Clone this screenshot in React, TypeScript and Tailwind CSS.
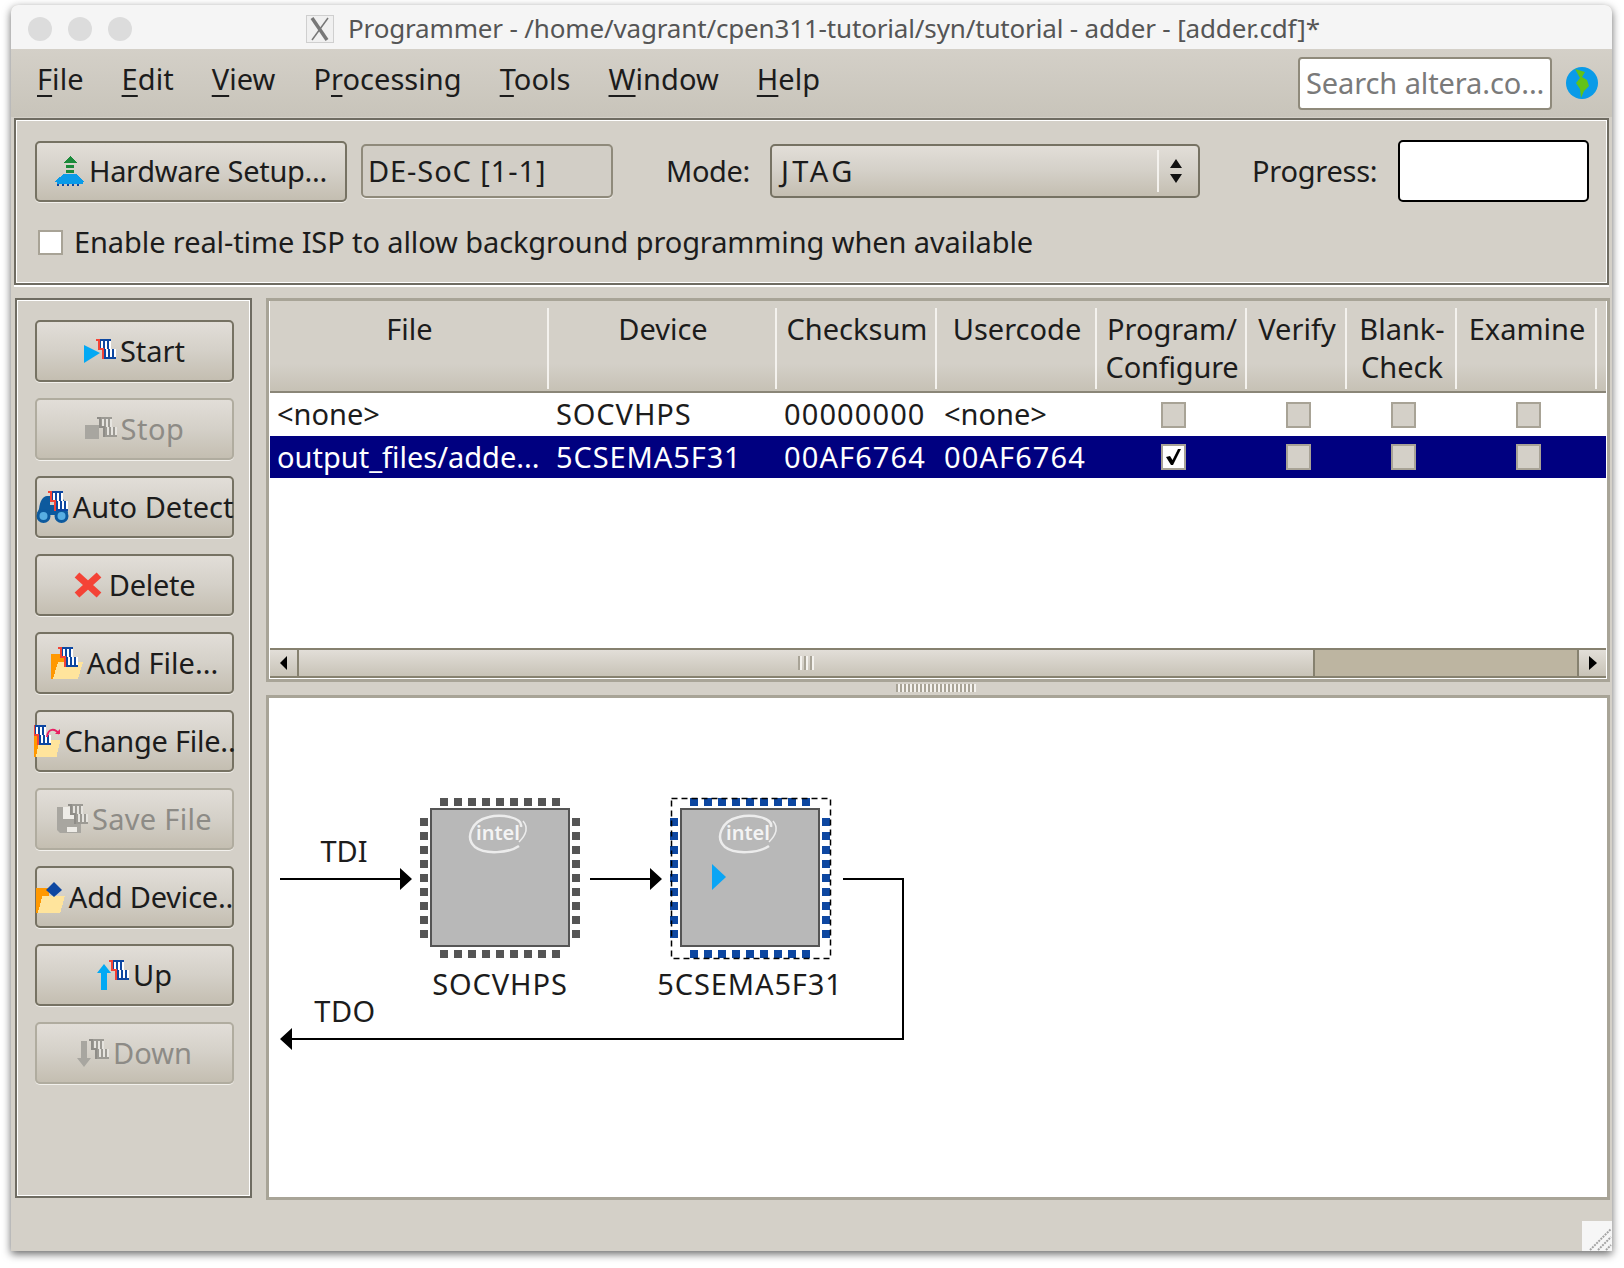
import React from "react";

const FONT = "font-['Noto_Sans',sans-serif]";

function Chain({ x, y, gray }: { x: number; y: number; gray?: boolean }) {
  const dark = gray ? "#9c9a94" : "#0d47a1";
  const edge = gray ? "#8f8d88" : "#f44336";
  const light = gray ? "#e6e4df" : "#ffffff";
  const stripes = (bx: number, by: number, h: number) =>
    [2, 6, 10].map((o) => <rect key={`${bx}-${o}`} x={bx + o} y={by} width={2} height={h} fill={light} />);
  return (
    <g transform={`translate(${x} ${y})`} shapeRendering="crispEdges">
      <rect x={3} y={0} width={12} height={10} fill={dark} />
      {stripes(3, 2, 8)}
      <rect x={8} y={10} width={12} height={10} fill={dark} />
      {stripes(8, 10, 8)}
      <path d="M0 1H3V10H7V20" fill="none" stroke={edge} strokeWidth={2} />
    </g>
  );
}

function Folder({ x, y }: { x: number; y: number }) {
  return (
    <g transform={`translate(${x} ${y})`} shapeRendering="crispEdges">
      <path d="M0 7H14V15H7L2 32H0Z" fill="#ff9800" />
      <path d="M7 15H32L27 32H2Z" fill="#ffe49c" />
    </g>
  );
}

function Ic({ w, h, children }: { w: number; h: number; children: React.ReactNode }) {
  return (
    <svg width={w} height={h} viewBox={`0 0 ${w} ${h}`} className="shrink-0">
      {children}
    </svg>
  );
}

const IconStart = () => (
  <Ic w={32} h={24}>
    <path d="M0 6L16 14L0 24Z" fill="#03a9f4" />
    <Chain x={12} y={0} />
  </Ic>
);
const IconStop = () => (
  <Ic w={32} h={24}>
    <rect x={0} y={8} width={14} height={14} fill="#a8a6a0" />
    <Chain x={12} y={0} gray />
  </Ic>
);
const IconAuto = () => (
  <Ic w={33} h={32}>
    <path d="M3 18C4 10 7 5 11 5H14V14H19V5H22C26 5 31 12 32 22H1Z" fill="#0d5a9e" />
    <rect x={13} y={18} width={7} height={6} fill="#0d5a9e" />
    <circle cx={7.5} cy={25} r={7} fill="#0d5a9e" />
    <circle cx={25.5} cy={25} r={7} fill="#0d5a9e" />
    <circle cx={7.5} cy={25} r={4} fill="#58aee2" />
    <circle cx={25.5} cy={25} r={4} fill="#58aee2" />
    <Chain x={12} y={0} />
  </Ic>
);
const IconDelete = () => (
  <Ic w={31} h={26}>
    <path d="M3 3L25 23M25 3L3 23" stroke="#f44336" strokeWidth={7} />
  </Ic>
);
const IconAdd = () => (
  <Ic w={32} h={32}>
    <Folder x={0} y={0} />
    <Chain x={7} y={0} />
  </Ic>
);
const IconChange = () => (
  <Ic w={27} h={32}>
    <g transform="scale(0.83 1)">
      <Folder x={0} y={0} />
    </g>
    <Chain x={-3} y={0} />
    <path d="M13 12C14 3 21 3 25 9" fill="none" stroke="#e91e63" strokeWidth={2} />
    <path d="M21 9H26V4Z" fill="#e91e63" />
  </Ic>
);
const IconSave = () => (
  <Ic w={31} h={30}>
    <path d="M0 3H24V29H3L0 26Z" fill="#a8a6a0" />
    <rect x={6} y={3} width={15} height={12} fill="#eeece7" />
    <rect x={10} y={23} width={10} height={5} fill="#eeece7" />
    <Chain x={11} y={0} gray />
  </Ic>
);
const IconDevice = () => (
  <Ic w={29} h={31}>
    <g transform="translate(0 -1) scale(0.9 1)">
      <Folder x={0} y={0} />
    </g>
    <path d="M18 0L26 8L18 15L10 8Z" fill="#0d47a1" />
  </Ic>
);
const IconUp = () => (
  <Ic w={32} h={30}>
    <path d="M7 4L14 13H10V30H4V13H0Z" fill="#03a9f4" />
    <Chain x={12} y={0} />
  </Ic>
);
const IconDown = () => (
  <Ic w={32} h={28}>
    <path d="M4 2H10V19H14L7 28L0 19H4Z" fill="#a8a6a0" />
    <Chain x={12} y={0} gray />
  </Ic>
);

function Btn({
  icon,
  label,
  disabled,
  className,
  track,
}: {
  icon: React.ReactNode;
  label: string;
  disabled?: boolean;
  className: string;
  track?: string;
}) {
  return (
    <div
      className={`${className} flex items-center justify-center whitespace-nowrap rounded-[5px] border-2 bg-gradient-to-b from-[#e2ded8] via-[#d4d0c8] to-[#c4beb1] shadow-[0_1px_0_#f2f0ec] ${
        disabled ? "border-[#b0ac9f] text-[#8d8b86]" : "border-[#767263] text-[#1c1c1c]"
      }`}
    >
      {icon}
      <span className={`ml-[4px] pb-[2px] ${track ?? ""}`}>{label}</span>
    </div>
  );
}

const sideButtons: { label: string; icon: React.ReactNode; disabled?: boolean; track?: string }[] = [
  { label: "Start", icon: <IconStart /> },
  { label: "Stop", icon: <IconStop />, disabled: true, track: "tracking-[0.5px]" },
  { label: "Auto Detect", icon: <IconAuto /> },
  { label: "Delete", icon: <IconDelete />, track: "tracking-[-0.3px]" },
  { label: "Add File...", icon: <IconAdd /> },
  { label: "Change File..", icon: <IconChange />, track: "tracking-[-0.25px]" },
  { label: "Save File", icon: <IconSave />, disabled: true, track: "tracking-[0.3px]" },
  { label: "Add Device..", icon: <IconDevice />, track: "tracking-[-0.2px]" },
  { label: "Up", icon: <IconUp /> },
  { label: "Down", icon: <IconDown />, disabled: true },
];

const menus: { pre: string; u: string; post: string }[] = [
  { pre: "", u: "F", post: "ile" },
  { pre: "", u: "E", post: "dit" },
  { pre: "", u: "V", post: "iew" },
  { pre: "P", u: "r", post: "ocessing" },
  { pre: "", u: "T", post: "ools" },
  { pre: "", u: "W", post: "indow" },
  { pre: "", u: "H", post: "elp" },
];

const headers: React.ReactNode[] = [
  "File",
  "Device",
  "Checksum",
  "Usercode",
  <>Program/<br /><span className="tracking-[-0.2px]">Configure</span></>,
  "Verify",
  <>Blank-<br />Check</>,
  "Examine",
  "",
];

const COLS = "grid grid-cols-[279px_228px_160px_160px_150px_100px_110px_140px_9px]";

function Check({ checked }: { checked?: boolean }) {
  return (
    <div
      className={`flex h-[26px] w-[25px] items-center justify-center border-[2px] border-[#a8a396] ${
        checked ? "bg-white" : "bg-[#d4d0c8]"
      }`}
    >
      {checked && (
        <svg width="17" height="18" viewBox="0 0 17 18">
          <path d="M1 9L5 8L7.5 12L13 1H16L8 17H6Z" fill="#000" />
        </svg>
      )}
    </div>
  );
}

function Row({ cells, selected, checked }: { cells: string[]; selected?: boolean; checked?: boolean }) {
  const tracks = ["", "tracking-[0.9px]", "tracking-[1.1px]", selected ? "tracking-[1.1px]" : ""];
  return (
    <div
      className={`${COLS} items-center ${selected ? "h-[42px] bg-[#000080] text-white" : "h-[43px] text-[#1c1c1c]"}`}
    >
      {cells.map((c, i) => (
        <div key={i} className={`whitespace-nowrap pl-[7px] pb-[2px] ${tracks[i]}`}>
          {c}
        </div>
      ))}
      <div className="flex justify-center pl-[3px]">
        <Check checked={checked} />
      </div>
      <div className="flex justify-center pl-[3px]">
        <Check />
      </div>
      <div className="flex justify-center pl-[3px]">
        <Check />
      </div>
      <div className="flex justify-center pl-[3px]">
        <Check />
      </div>
    </div>
  );
}

function Chip({ x, blue }: { x: number; blue?: boolean }) {
  const pin = blue ? "#0d47a1" : "#555555";
  const n = [0, 1, 2, 3, 4, 5, 6, 7, 8];
  return (
    <g>
      {n.map((i) => (
        <g key={i} fill={pin} shapeRendering="crispEdges">
          <rect x={x + 9 + i * 14} y={798} width={8} height={8} />
          <rect x={x + 9 + i * 14} y={950} width={8} height={8} />
          <rect x={x - 11} y={818 + i * 14} width={8} height={8} />
          <rect x={x + 141} y={818 + i * 14} width={8} height={8} />
        </g>
      ))}
      <rect x={x} y={809} width={138} height={137} fill="#b8b8b8" stroke="#555555" strokeWidth={2} />
      <path
        d={`M${x + 90} 827C${x + 92} 817 ${x + 70} 814 ${x + 58} 817C${x + 40} 821 ${x + 34} 838 ${x + 44} 847C${x + 54} 855 ${x + 78} 853 ${x + 88} 846`}
        fill="none"
        stroke="#ececec"
        strokeWidth={2.5}
      />
      <text x={x + 67} y={840} textAnchor="middle" fontSize={20} fontWeight={600} fontFamily="Noto Sans" fill="#f4f4f4">
        intel
      </text>
      <path d={`M${x + 92} 821C${x + 98} 828 ${x + 94} 836 ${x + 88} 842`} fill="none" stroke="#ececec" strokeWidth={1.5} />
    </g>
  );
}

export default function App() {
  return (
    <div className={`${FONT} h-[1268px] w-[1624px] overflow-hidden bg-white pl-[11px] pt-[5px] text-[29px] leading-none`}>
      <div className="flex h-[1246px] w-[1601px] flex-col rounded-t-[7px] bg-[#d4d0c8] shadow-[0_3px_8px_rgba(0,0,0,0.6)]">
        {/* title bar */}
        <div className="flex h-[44px] items-center rounded-t-[7px] bg-[#f5f5f5] pl-[17px] pt-[3px] text-[26px] text-[#555555]">
          <div className="flex gap-[16px]">
            <div className="h-[24px] w-[24px] rounded-full bg-[#dcdcdc]" />
            <div className="h-[24px] w-[24px] rounded-full bg-[#dcdcdc]" />
            <div className="h-[24px] w-[24px] rounded-full bg-[#dcdcdc]" />
          </div>
          <svg width="28" height="28" viewBox="0 0 28 28" className="ml-[174px] shrink-0">
            <rect x="0.5" y="0.5" width="27" height="27" fill="#f0f0f0" stroke="#cfcfcf" />
            <path d="M22 3L6 25" stroke="#777777" strokeWidth={1.5} />
            <path d="M6 3L21 25" stroke="#777777" strokeWidth={3.5} />
          </svg>
          <span className="ml-[14px] whitespace-nowrap pb-[1px] tracking-[-0.16px]">Programmer - /home/vagrant/cpen311-tutorial/syn/tutorial - adder - [adder.cdf]*</span>
        </div>

        {/* menu bar */}
        <div className="flex h-[68px] items-center bg-gradient-to-b from-[#d4d0c8] to-[#c8c4ba] pl-[26px] pr-[14px] text-[#1c1c1c]">
          <div className="mb-[10px] flex gap-[38px] tracking-[0.05px]">
            {menus.map((m) => (
              <span key={m.u + m.post} className="whitespace-nowrap">
                {m.pre}
                <span className="underline decoration-[2px] underline-offset-[5px]">{m.u}</span>
                {m.post}
              </span>
            ))}
          </div>
          <div className="ml-auto flex h-[53px] w-[254px] items-center whitespace-nowrap rounded-[4px] border-2 border-[#8f8a7b] bg-white pb-[2px] pl-[6px] tracking-[-0.1px] text-[#7a7a7a]">
            Search altera.co...
          </div>
          <svg width="32" height="32" viewBox="0 0 32 32" className="ml-[14px] shrink-0">
            <circle cx="16" cy="16" r="16" fill="#0a9be8" />
            <path d="M9 2L19 5L16 10L21 13L23 19L18 24L15 31L14 22L10 16L14 11Z" fill="#62c217" />
          </svg>
        </div>

        {/* toolbar */}
        <div className="mx-[3px] mt-[1px] flex h-[167px] flex-col border-2 border-[#6f6c62] pl-[19px] pt-[20px] shadow-[inset_0_0_0_1px_#ffffff,0_2px_0_#ffffff]">
          <div className="flex h-[62px] items-center">
            <Btn className="h-[61px] w-[312px]" icon={<HardwareIcon />} label="Hardware Setup..." track="tracking-[-0.3px]" />
            <div className="ml-[14px] flex h-[54px] w-[252px] items-center rounded-[5px] border-2 border-[#8f8a7b] bg-[#d2cec6] pb-[2px] pl-[5px] tracking-[0.9px] text-[#1c1c1c] shadow-[0_1px_0_#f2f0ec]">
              DE-SoC [1-1]
            </div>
            <div className="ml-[53px] w-[104px] pb-[2px] tracking-[-0.4px] text-[#1c1c1c]">Mode:</div>
            <div className="flex h-[54px] w-[430px] items-center rounded-[5px] border-2 border-[#767263] bg-gradient-to-b from-[#e2ded8] via-[#d4d0c8] to-[#c4beb1] pl-[9px] text-[#1c1c1c]">
              <span className="pb-[2px] tracking-[3.4px]">JTAG</span>
              <div className="ml-auto flex h-[42px] w-[41px] items-center justify-center border-l-2 border-[#f4f2ee] pr-[5px]">
                <svg width="14" height="24" viewBox="0 0 14 24">
                  <path d="M7 0L13 9H1ZM1 15H13L7 24Z" fill="#111" />
                </svg>
              </div>
            </div>
            <div className="ml-[52px] w-[146px] pb-[2px] tracking-[-0.25px] text-[#1c1c1c]">Progress:</div>
            <div className="h-[62px] w-[191px] rounded-[5px] border-2 border-black bg-white" />
          </div>
          <div className="ml-[3px] mt-[25px] flex items-center text-[#1c1c1c]">
            <div className="h-[25px] w-[25px] border-2 border-[#a8a396] bg-white" />
            <span className="ml-[11px] whitespace-nowrap pb-[1px] tracking-[-0.1px]">Enable real-time ISP to allow background programming when available</span>
          </div>
        </div>

        {/* main */}
        <div className="mt-[13px] flex h-[902px]">
          <div className="ml-[4px] flex h-[900px] w-[237px] flex-col gap-[16px] border-2 border-[#6f6c62] pl-[18px] pt-[20px] shadow-[inset_0_0_0_1px_#ffffff]">
            {sideButtons.map((b) => (
              <Btn key={b.label} className="h-[62px] w-[199px]" icon={b.icon} label={b.label} disabled={b.disabled} track={b.track} />
            ))}
          </div>

          <div className="ml-[14px] flex w-[1344px] flex-col">
            {/* table pane */}
            <div className="flex h-[384px] flex-col border-[3px] border-[#a8a497] bg-white pl-[1px] pr-[1px]">
              <div className={`${COLS} h-[92px] border-b-2 border-[#8a8678] bg-gradient-to-b from-[#d4d0c8] from-70% to-[#c6c1b5] pt-[7px] text-center text-[#1c1c1c]`}>
                {headers.map((h, i) => (
                  <div key={i} className={`h-[81px] whitespace-nowrap pl-[2px] pt-[2px] leading-[38px] ${i < 8 ? "border-r-2 border-[#f4f2ee]" : ""}`}>
                    {h}
                  </div>
                ))}
              </div>
              <Row cells={["<none>", "SOCVHPS", "00000000", "<none>"]} />
              <Row selected checked cells={["output_files/adde...", "5CSEMA5F31", "00AF6764", "00AF6764"]} />
              <div className="flex-1" />
              <div className="mb-[1px] flex h-[30px] border-y-2 border-[#86816f] bg-gradient-to-b from-[#e2ded8] to-[#c8c3b7]">
                <div className="flex w-[29px] items-center justify-center border-r-2 border-[#86816f]">
                  <svg width="8" height="14" viewBox="0 0 8 14">
                    <path d="M7 0V14L0 7Z" fill="#000" />
                  </svg>
                </div>
                <div className="flex w-[1016px] items-center justify-center border-r-2 border-[#86816f]">
                  <svg width="16" height="14" viewBox="0 0 16 14" shapeRendering="crispEdges">
                    <path d="M0 0h2v14H0zM6 0h2v14H6zM12 0h2v14h-2z" fill="#a8a396" />
                    <path d="M2 0h2v14H2zM8 0h2v14H8zM14 0h2v14h-2z" fill="#f4f2ee" />
                  </svg>
                </div>
                <div className="w-[262px] bg-[#bdb5a1]" />
                <div className="flex flex-1 items-center justify-center border-l-2 border-[#86816f]">
                  <svg width="8" height="14" viewBox="0 0 8 14">
                    <path d="M0 0V14L8 7Z" fill="#000" />
                  </svg>
                </div>
              </div>
            </div>

            {/* splitter */}
            <div className="flex h-[13px] items-center justify-center pb-[1px] pr-[4px]">
              <div className="h-[8px] w-[80px] bg-[repeating-linear-gradient(90deg,#a8a396_0_2px,#f4f2ee_2px_4px)]" />
            </div>

            {/* diagram */}
            <div className="relative flex-1 border-[3px] border-[#a8a497] bg-white text-[#1c1c1c]">
              <svg width="1338" height="499" viewBox="269 698 1338 499" className="absolute inset-0">
                <path d="M280 879H402M590 879H652M843 879H903V1039H288" fill="none" stroke="#000" strokeWidth={2} />
                <path d="M400 868L412 879L400 890ZM650 868L662 879L650 890ZM292 1028L280 1039L292 1050Z" fill="#000" />
                <Chip x={431} />
                <Chip x={681} blue />
                <rect x={671.5} y={798.5} width={159} height={160} fill="none" stroke="#000" strokeWidth={1.5} strokeDasharray="6 4" />
                <path d="M712 864L726 877L712 890Z" fill="#0aa5f5" />
              </svg>
              <span className="absolute left-[75px] top-[152px] -translate-x-1/2 -translate-y-1/2 whitespace-nowrap">TDI</span>
              <span className="absolute left-[76px] top-[312px] -translate-x-1/2 -translate-y-1/2 whitespace-nowrap tracking-[0.5px]">TDO</span>
              <span className="absolute left-[231px] top-[285px] -translate-x-1/2 -translate-y-1/2 whitespace-nowrap tracking-[0.9px]">SOCVHPS</span>
              <span className="absolute left-[481px] top-[285px] -translate-x-1/2 -translate-y-1/2 whitespace-nowrap tracking-[0.9px]">5CSEMA5F31</span>
            </div>
          </div>
        </div>

        {/* status bar */}
        <div className="relative flex-1">
          <svg width="30" height="30" viewBox="0 0 30 30" className="absolute bottom-0 right-0">
            <rect width="30" height="30" fill="#f6f6f6" />
            <path d="M8 29L29 8M16 29L29 16M24 29L29 24" stroke="#a3a3a3" strokeWidth={2} strokeDasharray="2 1" />
          </svg>
        </div>
      </div>
    </div>
  );
}

function HardwareIcon() {
  return (
    <svg width="30" height="30" viewBox="0 0 30 30" className="shrink-0" shapeRendering="crispEdges">
      <path d="M15 0L22 7H8Z" fill="#1b8a3a" />
      <rect x="11" y="9" width="8" height="3" fill="#1b8a3a" />
      <rect x="11" y="14" width="8" height="3" fill="#1b8a3a" />
      <path d="M9 18H21L29 26H0V25Z" fill="#0a9be8" />
      <path d="M2 26H28V28H2Z" fill="#0a9be8" />
      <path d="M2 28h2v2H2zM7 28h2v2H7zM12 28h2v2h-2zM17 28h2v2h-2zM22 28h2v2h-2z" fill="#0d47a1" />
    </svg>
  );
}
